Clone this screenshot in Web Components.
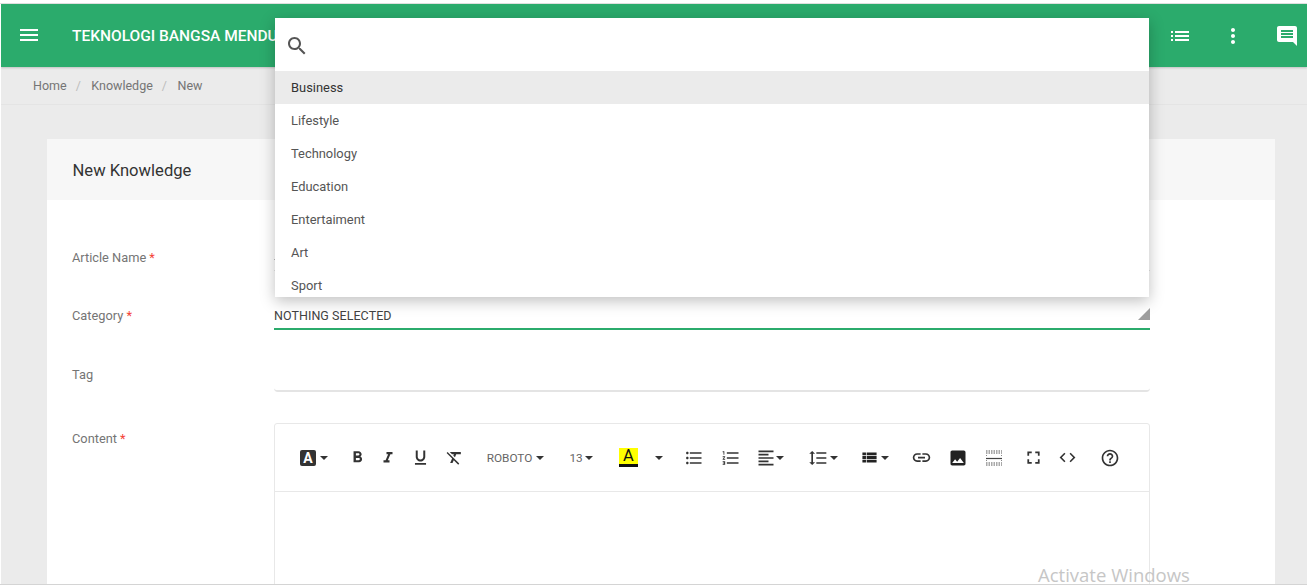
<!DOCTYPE html>
<html>
<head>
<meta charset="utf-8">
<title>New Knowledge</title>
<style>
html,body{margin:0;padding:0;height:100%;overflow:hidden;background:#fff;}
body{font:13px Roboto,"Liberation Sans",sans-serif;color:#333;}
</style>
</head>
<body>
<app-shell>
    <app-header title-text="TEKNOLOGI BANGSA MENDU"></app-header>
    <bread-crumbs></bread-crumbs>
    <knowledge-card heading="New Knowledge">
        <form-row label="Article Name" required style="--label-top:12px;margin-bottom:24px">
            <text-field style="height:35px"><i style="display:block;width:2px;height:1px;background:#bbb;margin-top:23px"></i></text-field>
        </form-row>
        <form-row label="Category" required style="--label-top:11px;margin-bottom:26px">
            <select-field value="NOTHING SELECTED"></select-field>
        </form-row>
        <form-row label="Tag" style="--label-top:9px;margin-bottom:31px">
            <text-field style="height:36px;--line:2px;--corner:4px"></text-field>
        </form-row>
        <form-row label="Content" required style="--label-top:6px">
            <rich-editor></rich-editor>
        </form-row>
    </knowledge-card>
    <category-menu></category-menu>
    <activate-note>Activate Windows</activate-note>
</app-shell>

<script>
const ICONS = {
    menu: 'M3 18h18v-2H3v2zm0-5h18v-2H3v2zm0-7v2h18V6H3z',
    search: 'M15.5 14h-.79l-.28-.27C15.41 12.59 16 11.11 16 9.5 16 5.91 13.09 3 9.5 3S3 5.91 3 9.5 5.91 16 9.5 16c1.61 0 3.09-.59 4.23-1.57l.27.28v.79l5 4.99L20.49 19l-4.99-5zm-6 0C7.01 14 5 11.99 5 9.5S7.01 5 9.5 5 14 7.01 14 9.5 11.99 14 9.5 14z',
    list: 'M3 13h2v-2H3v2zm0 4h2v-2H3v2zm0-8h2V7H3v2zm4 4h14v-2H7v2zm0 4h14v-2H7v2zM7 7v2h14V7H7z',
    more: 'M12 8c1.1 0 2-.9 2-2s-.9-2-2-2-2 .9-2 2 .9 2 2 2zm0 2c-1.1 0-2 .9-2 2s.9 2 2 2 2-.9 2-2-.9-2-2-2zm0 6c-1.1 0-2 .9-2 2s.9 2 2 2 2-.9 2-2-.9-2-2-2z',
    comment: 'M21.99 4c0-1.1-.89-2-1.99-2H4c-1.1 0-2 .9-2 2v12c0 1.1.9 2 2 2h14l4 4-.01-18zM18 14H6v-2h12v2zm0-3H6V9h12v2zm0-3H6V6h12v2z',
    bold: 'M15.6 10.79c.97-.67 1.65-1.77 1.65-2.79 0-2.26-1.75-4-4-4H7v14h7.04c2.09 0 3.71-1.7 3.71-3.79 0-1.52-.86-2.82-2.15-3.42zM10 6.5h3c.83 0 1.5.67 1.5 1.5s-.67 1.5-1.5 1.5h-3v-3zm3.5 9H10v-3h3.5c.83 0 1.5.67 1.5 1.5s-.67 1.5-1.5 1.5z',
    italic: 'M10 4v3h2.21l-3.42 8H6v3h8v-3h-2.21l3.42-8H18V4z',
    underline: 'M12 17c3.31 0 6-2.69 6-6V3h-2.5v8c0 1.93-1.57 3.5-3.5 3.5S8.5 12.93 8.5 11V3H6v8c0 3.31 2.69 6 6 6zm-7 2v2h14v-2H5z',
    clear: 'M3.27 5L2 6.27l6.97 6.97L6.5 19h3l1.57-3.66L16.73 21 18 19.73 3.55 5.27 3.27 5zM6 5v.18L8.82 8h2.4l-.72 1.68 2.1 2.1L14.21 8H20V5H6z',
    bullets: 'M4 10.5c-.83 0-1.5.67-1.5 1.5s.67 1.5 1.5 1.5 1.5-.67 1.5-1.5-.67-1.5-1.5-1.5zm0-6c-.83 0-1.5.67-1.5 1.5S3.17 7.5 4 7.5 5.5 6.83 5.5 6 4.83 4.5 4 4.5zm0 12c-.83 0-1.5.68-1.5 1.5s.68 1.5 1.5 1.5 1.5-.68 1.5-1.5-.67-1.5-1.5-1.5zM7 19h14v-2H7v2zm0-6h14v-2H7v2zm0-8v2h14V5H7z',
    numbers: 'M2 17h2v.5H3v1h1v.5H2v1h3v-4H2v1zm1-9h1V4H2v1h1v3zm-1 3h1.8L2 13.1v.9h3v-1H3.2L5 10.9V10H2v1zm5-6v2h14V5H7zm0 14h14v-2H7v2zm0-6h14v-2H7v2z',
    align: 'M15 15H3v2h12v-2zm0-8H3v2h12V7zM3 13h18v-2H3v2zm0 8h18v-2H3v2zM3 3v2h18V3H3z',
    spacing: 'M6 7h2.5L5 3.5 1.5 7H4v10H1.5L5 20.5 8.5 17H6V7zm4-2v2h12V5H10zm0 14h12v-2H10v2zm0-6h12v-2H10v2z',
    table: 'M2 5h5v3.800H2zM8 5h14v3.800H8zM2 10h5v4H2zM8 10h14v4H8zM2 15.200h5V19H2zM8 15.200h14V19H8z',
    link: 'M3.9 12c0-1.71 1.39-3.1 3.1-3.1h4V7H7c-2.76 0-5 2.24-5 5s2.24 5 5 5h4v-1.9H7c-1.71 0-3.1-1.39-3.1-3.1zM8 13h8v-2H8v2zm9-6h-4v1.9h4c1.71 0 3.1 1.39 3.1 3.1s-1.39 3.1-3.1 3.1h-4V17h4c2.76 0 5-2.24 5-5s-2.24-5-5-5z',
    image: 'M21 19V5c0-1.1-.9-2-2-2H5c-1.1 0-2 .9-2 2v14c0 1.1.9 2 2 2h14c1.1 0 2-.9 2-2zM8.5 13.5l2.5 3.01L14.5 12l4.5 6H5l3.5-4.5z',
    fullscreen: 'M7 14H5v5h5v-2H7v-3zm-2-4h2V7h3V5H5v5zm12 7h-3v2h5v-5h-2v3zM14 5v2h3v3h2V5h-5z',
    code: 'M9.4 16.6L4.8 12l4.6-4.6L8 6l-6 6 6 6 1.4-1.4zm5.2 0l4.6-4.6-4.6-4.6L16 6l6 6-6 6-1.4-1.4z',
    help: 'M11 18h2v-2h-2v2zm1-16C6.48 2 2 6.48 2 12s4.48 10 10 10 10-4.48 10-10S17.52 2 12 2zm0 18c-4.41 0-8-3.59-8-8s3.59-8 8-8 8 3.59 8 8-3.59 8-8 8zm0-14c-2.21 0-4 1.79-4 4h2c0-1.1.9-2 2-2s2 .9 2 2c0 2-3 1.75-3 5h2c0-2.25 3-2.5 3-5 0-2.21-1.79-4-4-4z'
};

function icon(name, size, color) {
    return `<svg width="${size}" height="${size}" viewBox="0 0 24 24" fill="${color}" style="display:block"><path d="${ICONS[name]}"/></svg>`;
}

function makeShadow(el, html) {
    el.attachShadow({ mode: 'open' }).innerHTML = html;
}

class AppShell extends HTMLElement {
    constructor() {
        super();
        makeShadow(this, `
<style>
:host{display:block;position:relative;height:585px;padding:4px 0 0 1px;box-sizing:border-box;
      background:linear-gradient(#dfdfdf,#dfdfdf) 0 3px/100% 1px no-repeat;border-bottom:1px solid #d4d4d4;}
.page{background:#ebebeb;height:100%;overflow:hidden;}
</style>
<div class="page"><slot></slot></div>`);
    }
}

class AppHeader extends HTMLElement {
    constructor() {
        super();
        makeShadow(this, `
<style>
:host{display:flex;align-items:center;height:63px;background:#2bab6c;position:relative;box-shadow:0 1px 2px rgba(0,0,0,.18);}
.burger{margin-left:16px;width:24px;margin-top:-2px;}
h1{margin:1px 0 0 31px;font:500 15.5px Roboto,sans-serif;color:#fff;white-space:nowrap;flex:1;}
.act{display:flex;align-items:center;justify-content:center;}
</style>
<div class="burger">${icon('menu', 24, '#fff')}</div>
<h1>${this.getAttribute('title-text')}</h1>
<div class="act" style="width:24px;margin-right:29px">${icon('list', 24, '#fff')}</div>
<div class="act" style="width:24px;margin-right:30px">${icon('more', 24, '#fff')}</div>
<div class="act" style="width:24px;margin-right:8px">${icon('comment', 24, '#fff')}</div>`);
    }
}

class BreadCrumbs extends HTMLElement {
    constructor() {
        super();
        makeShadow(this, `
<style>
:host{display:flex;align-items:center;height:36px;padding:0 0 1px 32px;border-bottom:1px solid #e4e4e4;
      font:12.5px Roboto,sans-serif;color:#757575;}
i{font-style:normal;color:#bdbdbd;margin:0 10.5px 0 9px;}
</style>
<span>Home</span><i>/</i><span>Knowledge</span><i>/</i><span>New</span>`);
    }
}

class KnowledgeCard extends HTMLElement {
    constructor() {
        super();
        makeShadow(this, `
<style>
:host{display:block;margin:34px 31px 0 46px;background:#fff;width:1228px;}
header{height:60px;padding:1px 0 0 25.5px;background:#f7f7f7;display:flex;align-items:center;
       font:16.6px Roboto,sans-serif;color:#333;}
.body{padding:36px 125px 0 25px;}
</style>
<header>${this.getAttribute('heading')}</header>
<div class="body"><slot></slot></div>`);
    }
}

class FormRow extends HTMLElement {
    constructor() {
        super();
        const star = this.hasAttribute('required') ? ' <b>*</b>' : '';
        makeShadow(this, `
<style>
:host{display:grid;grid-template-columns:202px 876px;}
label{padding-top:var(--label-top,10px);font:12.8px/20px Roboto,sans-serif;color:#757575;}
b{color:#f44336;font-weight:400;}
</style>
<label>${this.getAttribute('label')}${star}</label>
<div><slot></slot></div>`);
    }
}

class TextField extends HTMLElement {
    constructor() {
        super();
        makeShadow(this, `
<style>
:host{display:block;box-sizing:border-box;overflow:hidden;border-bottom:var(--line,1px) solid #e4e4e4;border-radius:0 0 var(--corner,0) var(--corner,0);}
</style>
<slot></slot>`);
    }
}

class SelectField extends HTMLElement {
    constructor() {
        super();
        makeShadow(this, `
<style>
:host{display:flex;justify-content:space-between;align-items:flex-end;box-sizing:border-box;height:35px;
      padding-bottom:4px;border-bottom:2px solid #2bab6c;font:12.5px/16px Roboto,sans-serif;color:#424242;letter-spacing:.05px;}
.tri{width:12px;height:12px;margin-bottom:4px;background:#9e9e9e;clip-path:polygon(100% 0,100% 100%,0 100%);}
</style>
<span>${this.getAttribute('value')}</span><div class="tri"></div>`);
    }
}

// left edge, width and content of every toolbar item, in page pixels
const INK = '#333';
const caret = '<div style="width:0;height:0;border:4px solid transparent;border-top-color:#333;border-bottom:0"></div>';
const TOOLS = [
    [300, 16, '<div class="box">A</div>'], [319.5, 8, caret],
    [348, 19, icon('bold', 19, INK)],
    [379, 18, icon('italic', 18, INK)],
    [410.5, 19, icon('underline', 19, INK)],
    [445, 19, icon('clear', 19, INK)],
    [487, 45, '<div class="txt">ROBOTO</div>'], [535.5, 8, caret],
    [570, 12, '<div class="txt">13</div>'], [585, 8, caret],
    [619, 19, '<div class="hi">A</div>'], [654.5, 8, caret],
    [684, 20, icon('bullets', 20, INK)],
    [720.500, 20, icon('numbers', 20, INK)],
    [755.500, 20, icon('align', 20, INK)], [776, 8, caret],
    [808, 20, icon('spacing', 20, INK)], [830, 8, caret],
    [861, 17, icon('table', 17, '#222')], [880.500, 8, caret],
    [911, 21, icon('link', 21, INK)],
    [948, 20, icon('image', 20, '#222')],
    [986, 16, `<svg width="16" height="16" viewBox="0 0 16 16" style="display:block"><path d="M0 1h16M0 3h16M0 13h16M0 15h16" stroke="#555" stroke-width="1" stroke-dasharray="1.500 1"/><path d="M.5 5v2M15.500 5v2M.5 10v2M15.500 10v2" stroke="#888" stroke-width="1" stroke-dasharray="1 1"/><path d="M0 8.500h16" stroke="#444" stroke-width="1.200"/></svg>`],
    [1022.500, 21, icon('fullscreen', 21, INK)],
    [1058, 19, icon('code', 19, INK)],
    [1100, 20, icon('help', 20, INK)]
];

class RichEditor extends HTMLElement {
    constructor() {
        super();
        let x = 275;
        const items = TOOLS.map(([left, width, html]) => {
            const out = `<div class="item" style="margin-left:${left - x}px;width:${width}px">${html}</div>`;
            x = left + width;
            return out;
        }).join('');
        makeShadow(this, `
<style>
:host{display:block;border:1px solid #e8e8e8;border-radius:3px 3px 0 0;height:400px;}
.bar{display:flex;align-items:center;height:67px;border-bottom:1px solid #e8e8e8;font:12px Roboto,sans-serif;color:#666;}
.item{display:flex;justify-content:center;align-items:center;flex:none;}
.box{width:16px;height:16px;border-radius:2px;background:#333;color:#fff;font:700 14px/16px Roboto,sans-serif;text-align:center;}
.txt{white-space:nowrap;font-size:11.8px;}
.hi{width:19px;height:19px;box-sizing:border-box;background:#ff0;color:#111;border-bottom:3px solid #111;font:16.5px/15px Roboto,sans-serif;text-align:center;}
</style>
<div class="bar">${items}</div>`);
    }
}

class CategoryMenu extends HTMLElement {
    constructor() {
        super();
        const rows = ['Business', 'Lifestyle', 'Technology', 'Education', 'Entertaiment', 'Art', 'Sport'];
        makeShadow(this, `
<style>
:host{position:absolute;left:275px;top:18px;width:874px;height:279px;background:#fff;overflow:hidden;
      box-shadow:0 4px 14px rgba(0,0,0,.25);}
.find{height:51px;padding:2px 0 0 10px;display:flex;align-items:center;}
.opt{height:33px;padding-left:16px;font:12.9px/33px Roboto,sans-serif;color:#555;}
.opt.on{background:#ebebeb;color:#333;}
</style>
<div class="find">${icon('search', 24, '#555')}</div>
${rows.map((r, i) => `<div class="opt${i ? '' : ' on'}">${r}</div>`).join('')}`);
    }
}

class ActivateNote extends HTMLElement {
    constructor() {
        super();
        makeShadow(this, `
<style>
:host{position:absolute;left:1038px;top:566px;font:18.5px/18px "Open Sans","Noto Sans",sans-serif;color:#c6c6c6;white-space:nowrap;}
</style>
<slot></slot>`);
    }
}

customElements.define('app-shell', AppShell);
customElements.define('app-header', AppHeader);
customElements.define('bread-crumbs', BreadCrumbs);
customElements.define('knowledge-card', KnowledgeCard);
customElements.define('form-row', FormRow);
customElements.define('text-field', TextField);
customElements.define('select-field', SelectField);
customElements.define('rich-editor', RichEditor);
customElements.define('category-menu', CategoryMenu);
customElements.define('activate-note', ActivateNote);
</script>
</body>
</html>
